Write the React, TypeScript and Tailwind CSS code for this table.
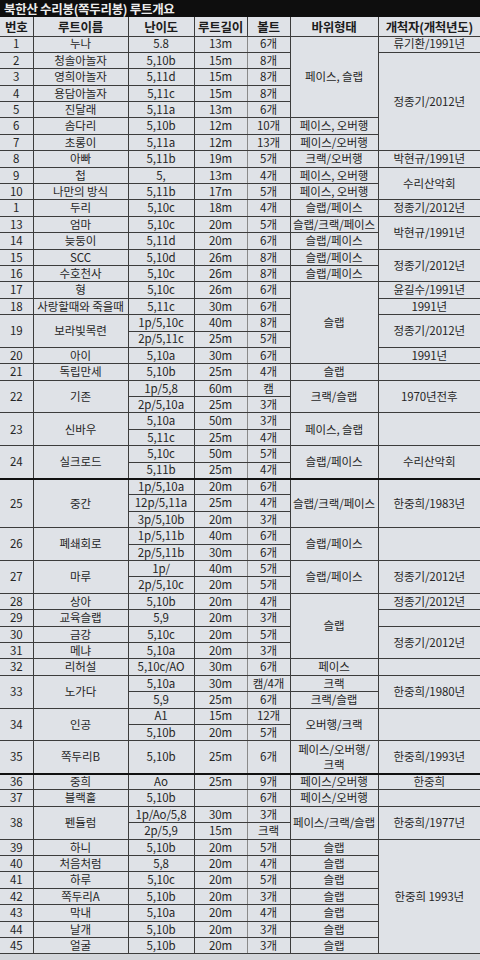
import React from 'react';

type Sub = [string, string, string];
type Route = { no: string; name: string; subs: Sub[]; tall?: boolean };

const routes: Route[] = [
  { no: '1', name: '누나', subs: [['5.8', '13m', '6개']] },
  { no: '2', name: '청솔아놀자', subs: [['5,10b', '15m', '8개']] },
  { no: '3', name: '영희아놀자', subs: [['5,11d', '15m', '8개']] },
  { no: '4', name: '용담아놀자', subs: [['5,11c', '15m', '8개']] },
  { no: '5', name: '진달래', subs: [['5,11a', '13m', '6개']] },
  { no: '6', name: '솜다리', subs: [['5,10b', '12m', '10개']] },
  { no: '7', name: '초롱이', subs: [['5,11a', '12m', '13개']] },
  { no: '8', name: '아빠', subs: [['5,11b', '19m', '5개']] },
  { no: '9', name: '첩', subs: [['5,', '13m', '4개']] },
  { no: '10', name: '나만의 방식', subs: [['5,11b', '17m', '5개']] },
  { no: '1', name: '두리', subs: [['5,10c', '18m', '4개']] },
  { no: '13', name: '엄마', subs: [['5,10c', '20m', '5개']] },
  { no: '14', name: '늦둥이', subs: [['5,11d', '20m', '6개']] },
  { no: '15', name: 'SCC', subs: [['5,10d', '26m', '8개']] },
  { no: '16', name: '수호천사', subs: [['5,10c', '26m', '8개']] },
  { no: '17', name: '형', subs: [['5,10c', '26m', '6개']] },
  { no: '18', name: '사랑할때와 죽을때', subs: [['5,11c', '30m', '6개']] },
  { no: '19', name: '보라빛목련', subs: [['1p/5,10c', '40m', '8개'], ['2p/5,11c', '25m', '5개']] },
  { no: '20', name: '아이', subs: [['5,10a', '30m', '6개']] },
  { no: '21', name: '독립만세', subs: [['5,10b', '25m', '4개']] },
  { no: '22', name: '기존', subs: [['1p/5,8', '60m', '캠'], ['2p/5,10a', '25m', '3개']] },
  { no: '23', name: '신바우', subs: [['5,10a', '50m', '3개'], ['5,11c', '25m', '4개']] },
  { no: '24', name: '실크로드', subs: [['5,10c', '50m', '5개'], ['5,11b', '25m', '4개']] },
  {
    no: '25',
    name: '중간',
    subs: [['1p/5,10a', '20m', '6개'], ['12p/5,11a', '25m', '4개'], ['3p/5,10b', '20m', '3개']],
  },
  { no: '26', name: '폐쇄회로', subs: [['1p/5,11b', '40m', '6개'], ['2p/5,11b', '30m', '6개']] },
  { no: '27', name: '마루', subs: [['1p/', '40m', '5개'], ['2p/5,10c', '20m', '5개']] },
  { no: '28', name: '상아', subs: [['5,10b', '20m', '4개']] },
  { no: '29', name: '교육슬랩', subs: [['5,9', '20m', '3개']] },
  { no: '30', name: '금강', subs: [['5,10c', '20m', '5개']] },
  { no: '31', name: '메냐', subs: [['5,10a', '20m', '3개']] },
  { no: '32', name: '리허설', subs: [['5,10c/AO', '30m', '6개']] },
  { no: '33', name: '노가다', subs: [['5,10a', '30m', '캠/4개'], ['5,9', '25m', '6개']] },
  { no: '34', name: '인공', subs: [['A1', '15m', '12개'], ['5,10b', '20m', '5개']] },
  { no: '35', name: '쪽두리B', subs: [['5,10b', '25m', '6개']], tall: true },
  { no: '36', name: '중희', subs: [['Ao', '25m', '9개']] },
  { no: '37', name: '블랙홀', subs: [['5,10b', '', '6개']] },
  { no: '38', name: '펜듈럼', subs: [['1p/Ao/5,8', '30m', '3개'], ['2p/5,9', '15m', '크랙']] },
  { no: '39', name: '하니', subs: [['5,10b', '20m', '5개']] },
  { no: '40', name: '처음처럼', subs: [['5,8', '20m', '4개']] },
  { no: '41', name: '하루', subs: [['5,10c', '20m', '5개']] },
  { no: '42', name: '쪽두리A', subs: [['5,10b', '20m', '3개']] },
  { no: '43', name: '막내', subs: [['5,10a', '20m', '4개']] },
  { no: '44', name: '날개', subs: [['5,10b', '20m', '3개']] },
  { no: '45', name: '얼굴', subs: [['5,10b', '20m', '3개']] },
];

// [text, number of table rows it covers]
const rockTypes: [string, number][] = [
  ['페이스, 슬랩', 5],
  ['페이스, 오버행', 1],
  ['페이스/오버행', 1],
  ['크랙/오버행', 1],
  ['페이스, 오버행', 1],
  ['페이스, 오버행', 1],
  ['슬랩/페이스', 1],
  ['슬랩/크랙/페이스', 1],
  ['슬랩/페이스', 1],
  ['슬랩/페이스', 1],
  ['슬랩/페이스', 1],
  ['슬랩', 5],
  ['슬랩', 1],
  ['크랙/슬랩', 2],
  ['페이스, 슬랩', 2],
  ['슬랩/페이스', 2],
  ['슬랩/크랙/페이스', 3],
  ['슬랩/페이스', 2],
  ['슬랩/페이스', 2],
  ['슬랩', 4],
  ['페이스', 1],
  ['크랙', 1],
  ['크랙/슬랩', 1],
  ['오버행/크랙', 2],
  ['페이스/오버행/\n크랙', 1],
  ['페이스/오버행', 1],
  ['페이스/오버행', 1],
  ['페이스/크랙/슬랩', 2],
  ['슬랩', 1],
  ['슬랩', 1],
  ['슬랩', 1],
  ['슬랩', 1],
  ['슬랩', 1],
  ['슬랩', 1],
  ['슬랩', 1],
];

const pioneers: [string, number][] = [
  ['류기환/1991년', 1],
  ['정종기/2012년', 6],
  ['박현규/1991년', 1],
  ['수리산악회', 2],
  ['정종기/2012년', 1],
  ['박현규/1991년', 2],
  ['정종기/2012년', 2],
  ['윤길수/1991년', 1],
  ['1991년', 1],
  ['정종기/2012년', 2],
  ['1991년', 1],
  ['', 1],
  ['1970년전후', 2],
  ['', 2],
  ['수리산악회', 2],
  ['한중희/1983년', 3],
  ['', 2],
  ['정종기/2012년', 2],
  ['정종기/2012년', 1],
  ['', 1],
  ['정종기/2012년', 2],
  ['', 1],
  ['한중희/1980년', 2],
  ['', 2],
  ['한중희/1993년', 1],
  ['한중희', 1],
  ['', 1],
  ['한중희/1977년', 2],
  ['한중희 1993년', 7],
];

function startsOf(spans: [string, number][]) {
  const m = new Map<number, [string, number]>();
  let t = 0;
  for (const s of spans) {
    m.set(t, s);
    t += s[1];
  }
  return m;
}

const cell = 'border border-[#3c3c3c] p-0 text-center align-middle whitespace-pre-line';
const thick = 'border-t-2 border-t-[#111]';

export default function App() {
  const rockStarts = startsOf(rockTypes);
  const pioneerStarts = startsOf(pioneers);

  const rows: React.ReactNode[] = [];
  let t = 0;
  routes.forEach((r) => {
    const heavy = r.no === '25' || r.no === '36';
    r.subs.forEach((s, j) => {
      const rock = rockStarts.get(t);
      const pioneer = pioneerStarts.get(t);
      const top = heavy && j === 0 ? thick : '';
      rows.push(
        <tr key={t} className={r.tall ? 'h-[32.8px]' : 'h-[16.4px]'}>
          {j === 0 && (
            <>
              <td rowSpan={r.subs.length} className={`${cell} ${top} border-l-0`}>
                {r.no}
              </td>
              <td rowSpan={r.subs.length} className={`${cell} ${top}`}>
                {r.name}
              </td>
            </>
          )}
          <td className={`${cell} ${top}`}>{s[0]}</td>
          <td className={`${cell} ${top} border-r-[#8a8a8a]`}>{s[1]}</td>
          <td className={`${cell} ${top}`}>{s[2]}</td>
          {rock && (
            <td rowSpan={rock[1]} className={`${cell} ${top} ${r.tall ? 'leading-[15px]' : ''}`}>
              {rock[0]}
            </td>
          )}
          {pioneer && (
            <td rowSpan={pioneer[1]} className={`${cell} ${top} border-r-0`}>
              {pioneer[0]}
            </td>
          )}
        </tr>
      );
      t++;
    });
  });

  const headers = ['번호', '루트이름', '난이도', '루트길이', '볼트', '바위형태', '개척자(개척년도)'];

  return (
    <div className="min-h-screen w-[480px] bg-[#d3d6db] font-['Noto_Sans_CJK_KR',sans-serif] text-[#262626]">
      <div className="h-[17px] bg-[#0e0e0e] pl-1 text-[12.5px] font-bold leading-[17px] tracking-tight text-[#ececec]">
        북한산 수리봉(쪽두리봉) 루트개요
      </div>
      <table className="w-full table-fixed border-collapse bg-[#dfe2e7] text-[11.5px] leading-none tracking-[-0.1px]">
        <colgroup>
          <col className="w-[33px]" />
          <col className="w-[95px]" />
          <col className="w-[66px]" />
          <col className="w-[53px]" />
          <col className="w-[43px]" />
          <col className="w-[88px]" />
          <col className="w-[102px]" />
        </colgroup>
        <thead>
          <tr className="h-[19px]">
            {headers.map((h, i) => (
              <th
                key={h}
                className={`${cell} border-t-0 pt-px text-[12.5px] font-bold tracking-tight text-[#1c1c1c] ${
                  i === 0 ? 'border-l-0' : ''
                } ${i === 6 ? 'border-r-0' : ''}`}
              >
                {h}
              </th>
            ))}
          </tr>
        </thead>
        <tbody>{rows}</tbody>
      </table>
    </div>
  );
}
